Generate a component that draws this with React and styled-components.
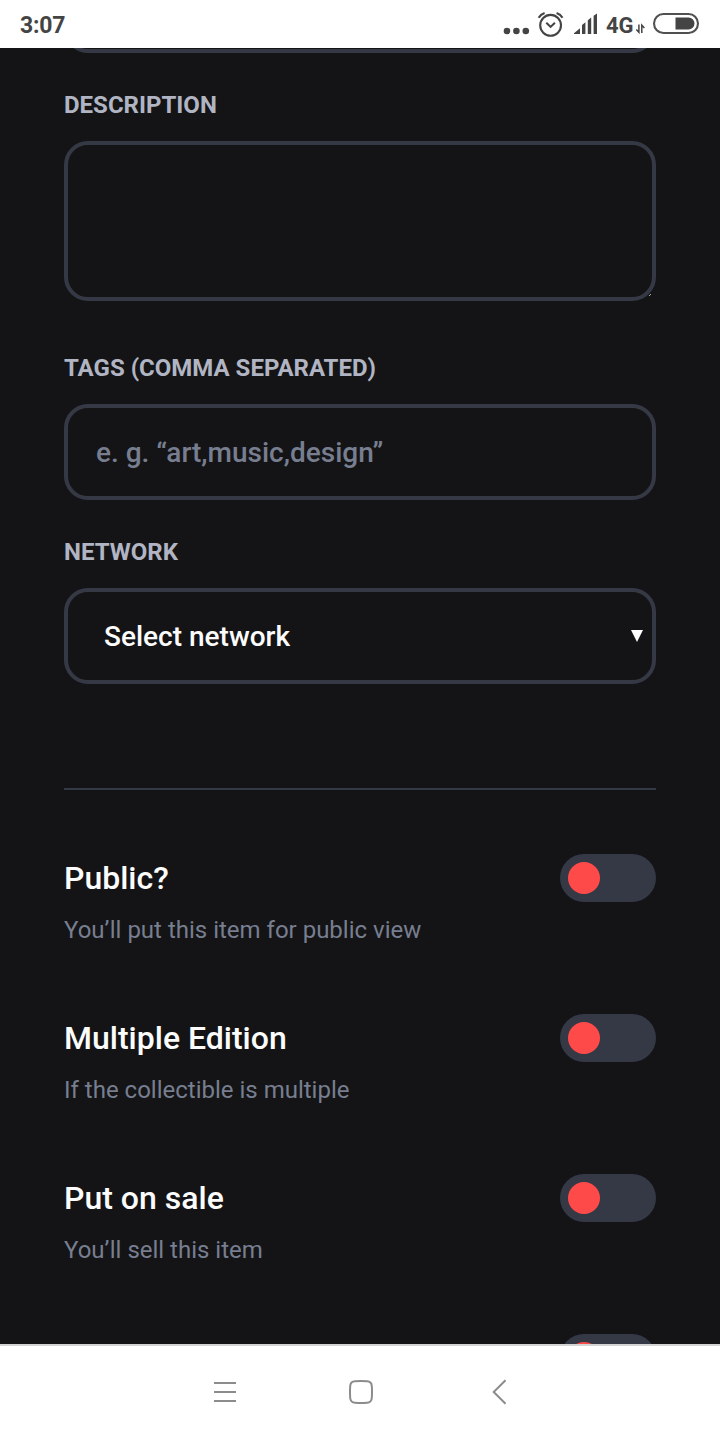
import React from 'react';
import styled, { createGlobalStyle } from 'styled-components';

const GlobalStyle = createGlobalStyle`
  * {
    box-sizing: border-box;
  }
  body {
    margin: 0;
    background: #141416;
    font-family: Roboto, sans-serif;
  }
`;

const Screen = styled.div`
  width: 720px;
  height: 1440px;
  display: flex;
  flex-direction: column;
  overflow: hidden;
  background: #141416;
`;

const StatusBar = styled.header`
  height: 48px;
  flex: none;
  display: flex;
  align-items: center;
  justify-content: space-between;
  padding: 0 19px 0 20px;
  background: #fff;
  color: #444;
`;

const Clock = styled.span`
  padding-top: 2px;
  font-size: 23px;
  font-weight: 700;
  letter-spacing: -0.2px;
`;

const StatusIcons = styled.div`
  display: flex;
  align-items: center;
  svg {
    display: block;
  }
`;

const NetworkType = styled.span`
  width: 28px;
  margin-left: 8px;
  padding-top: 2px;
  font-size: 22px;
  font-weight: 700;
`;

const Content = styled.main`
  flex: 1;
  min-height: 0;
  overflow: hidden;
  padding: 0 64px;
`;

const PreviousField = styled.div`
  height: 96px;
  margin-top: -91px;
  border: 4px solid #353945;
  border-radius: 24px;
`;

const Label = styled.label`
  display: block;
  height: 24px;
  margin: ${(props) => props.$top}px 0 24px;
  color: #b1b5c3;
  font-size: 24px;
  font-weight: 700;
  line-height: 24px;
  text-transform: uppercase;
`;

const TextAreaWrap = styled.div`
  position: relative;
`;

const TextArea = styled.textarea`
  display: block;
  width: 100%;
  height: 160px;
  background: none;
  border: 4px solid #353945;
  border-radius: 24px;
  resize: none;
`;

const ResizeMark = styled.svg`
  position: absolute;
  right: 4px;
  bottom: 4px;
`;

const Input = styled.input`
  display: block;
  width: 100%;
  height: 96px;
  padding: 0 28px;
  background: none;
  border: 4px solid #353945;
  border-radius: 24px;
  color: #fcfcfd;
  font-family: inherit;
  font-size: 28px;
  font-weight: 500;
  &::placeholder {
    color: #777e90;
  }
`;

const Select = styled.div`
  height: 96px;
  display: flex;
  align-items: center;
  justify-content: space-between;
  padding: 0 9px 0 36px;
  border: 4px solid #353945;
  border-radius: 24px;
  color: #fcfcfd;
  font-size: 28px;
  font-weight: 500;
`;

const Divider = styled.hr`
  height: 2px;
  margin: 104px 0 64px;
  border: 0;
  background: #353945;
`;

const Option = styled.div`
  height: 96px;
  display: flex;
  justify-content: space-between;
  margin-bottom: 64px;
`;

const OptionTitle = styled.div`
  color: #fcfcfd;
  font-size: 32px;
  font-weight: 500;
  line-height: 48px;
`;

const OptionNote = styled.div`
  margin-top: 8px;
  color: #777e90;
  font-size: 24px;
  line-height: 40px;
`;

const Switch = styled.div`
  width: 96px;
  height: 48px;
  flex: none;
  padding: 8px;
  border-radius: 24px;
  background: #353945;
  &::before {
    content: '';
    display: block;
    width: 32px;
    height: 32px;
    border-radius: 50%;
    background: #ff4a4a;
  }
`;

const NavBar = styled.nav`
  height: 96px;
  flex: none;
  display: flex;
  align-items: center;
  gap: 112px;
  padding-left: 213px;
  padding-bottom: 2px;
  border-top: 2px solid #d4d4d4;
  background: #fff;
`;

const MoreIcon = () => (
  <svg width="28" height="48" fill="#444">
    <circle cx="4" cy="31" r="3.3" />
    <circle cx="13.4" cy="31" r="3.3" />
    <circle cx="22.8" cy="31" r="3.3" />
  </svg>
);

const AlarmIcon = () => (
  <svg width="36" height="48" fill="none" stroke="#444" strokeWidth="2.1">
    <circle cx="19.6" cy="25.3" r="10.4" />
    <path d="M15.3 22.8l4.3 4.1 4.3-4.1" />
    <path d="M7.7 17.8q1.9-3.4 5.9-4.7M31.5 17.8q-1.9-3.4-5.9-4.7" />
  </svg>
);

const SignalIcon = () => (
  <svg width="31" height="48" fill="#444">
    <path d="M7 34v-.8l6-4.9V34z" />
    <path d="M15 34v-9l3.4-2.8V34zM20.8 34V20.2l3.4-2.8V34zM26.6 34V15.8l3.4-2.4V34z" />
  </svg>
);

const DataIcon = () => (
  <svg width="12" height="48" fill="none" stroke="#444" strokeWidth="1.5">
    <path d="M4.9 24.5v7.8L2.3 29.6M7.8 33v-7.8l2.6 2.7" />
  </svg>
);

const BatteryIcon = () => (
  <svg width="55" height="48">
    <rect x="8" y="14" width="44" height="19" rx="9.5" fill="none" stroke="#505050" strokeWidth="2.1" />
    <path d="M29.5 17.5h13a6 6 0 0 1 0 12h-13z" fill="#444" />
  </svg>
);

const MenuIcon = () => (
  <svg width="24" height="26" stroke="#8c8c8c" strokeWidth="2">
    <path d="M1 4h22M1 13h22M1 22h22" />
  </svg>
);

const HomeIcon = () => (
  <svg width="24" height="26" fill="none" stroke="#8c8c8c" strokeWidth="2">
    <path d="M6 2.2q6-.4 12 0 4.5.3 4.8 4.8.4 6 0 12-.3 4.5-4.8 4.8-6 .4-12 0-4.5-.3-4.8-4.8-.4-6 0-12 .3-4.5 4.8-4.8z" />
  </svg>
);

const BackIcon = () => (
  <svg width="24" height="26" fill="none" stroke="#8c8c8c" strokeWidth="2">
    <path d="M20.5 1.3L8.7 13l11.8 11.7" />
  </svg>
);

const options = [
  { id: 'public', title: 'Public?', note: 'You’ll put this item for public view' },
  { id: 'multiple', title: 'Multiple Edition', note: 'If the collectible is multiple' },
  { id: 'sale', title: 'Put on sale', note: 'You’ll sell this item' },
  { id: 'next', title: '', note: '' },
];

const App = () => (
  <>
    <GlobalStyle />
    <Screen>
      <StatusBar>
        <Clock>3:07</Clock>
        <StatusIcons>
          <MoreIcon />
          <AlarmIcon />
          <SignalIcon />
          <NetworkType>4G</NetworkType>
          <DataIcon />
          <BatteryIcon />
        </StatusIcons>
      </StatusBar>
      <Content>
        <PreviousField />
        <Label $top={40}>Description</Label>
        <TextAreaWrap>
          <TextArea />
          <ResizeMark width="4" height="4" stroke="#aaa">
            <path d="M1 3l2-2" />
          </ResizeMark>
        </TextAreaWrap>
        <Label $top={55}>Tags (comma separated)</Label>
        <Input placeholder="e. g. “art,music,design”" />
        <Label $top={40}>Network</Label>
        <Select>
          Select network
          <svg width="12" height="14" fill="#fff">
            <path d="M0 1h12L6 13z" />
          </svg>
        </Select>
        <Divider />
        {options.map((item) => (
          <Option key={item.id}>
            <div>
              <OptionTitle>{item.title}</OptionTitle>
              <OptionNote>{item.note}</OptionNote>
            </div>
            <Switch />
          </Option>
        ))}
      </Content>
      <NavBar>
        <MenuIcon />
        <HomeIcon />
        <BackIcon />
      </NavBar>
    </Screen>
  </>
);

export default App;
